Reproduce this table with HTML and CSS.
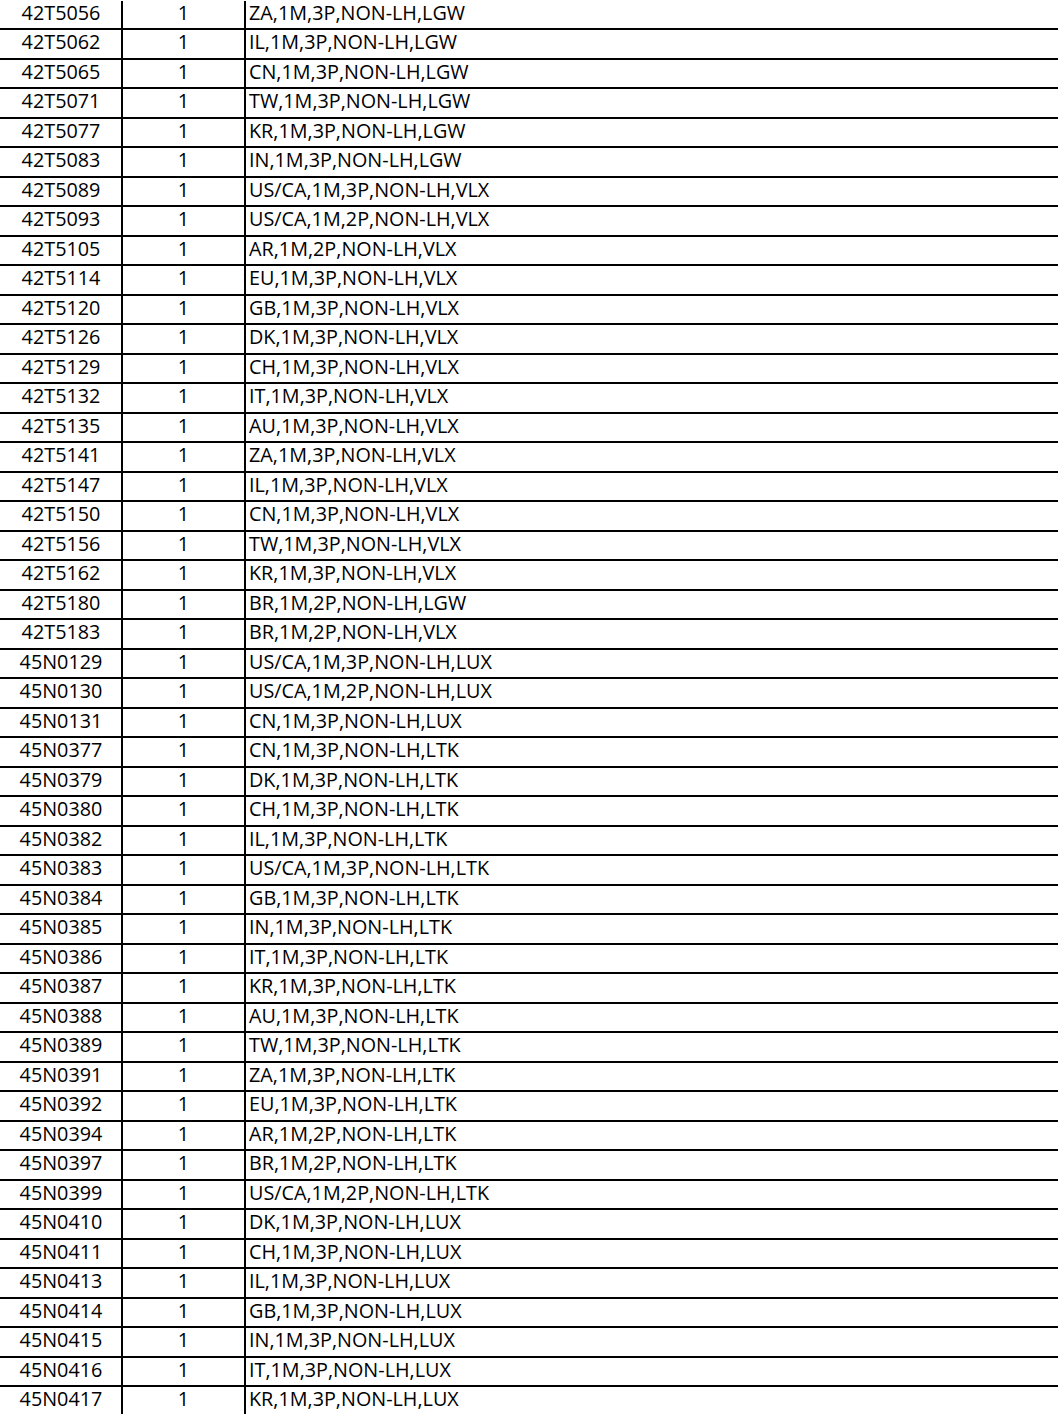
FILE: index.html
```html
<!DOCTYPE html>
<html>
<head>
<meta charset="utf-8">
<link rel="stylesheet" href="styles.css">
</head>
<body>
<div class="sheet">
<div class="row"><div class="c part">42T5056</div><div class="c qty">1</div><div class="c desc">ZA,1M,3P,NON-LH,LGW</div></div>
<div class="row"><div class="c part">42T5062</div><div class="c qty">1</div><div class="c desc">IL,1M,3P,NON-LH,LGW</div></div>
<div class="row"><div class="c part">42T5065</div><div class="c qty">1</div><div class="c desc">CN,1M,3P,NON-LH,LGW</div></div>
<div class="row"><div class="c part">42T5071</div><div class="c qty">1</div><div class="c desc">TW,1M,3P,NON-LH,LGW</div></div>
<div class="row"><div class="c part">42T5077</div><div class="c qty">1</div><div class="c desc">KR,1M,3P,NON-LH,LGW</div></div>
<div class="row"><div class="c part">42T5083</div><div class="c qty">1</div><div class="c desc">IN,1M,3P,NON-LH,LGW</div></div>
<div class="row"><div class="c part">42T5089</div><div class="c qty">1</div><div class="c desc">US/CA,1M,3P,NON-LH,VLX</div></div>
<div class="row"><div class="c part">42T5093</div><div class="c qty">1</div><div class="c desc">US/CA,1M,2P,NON-LH,VLX</div></div>
<div class="row"><div class="c part">42T5105</div><div class="c qty">1</div><div class="c desc">AR,1M,2P,NON-LH,VLX</div></div>
<div class="row"><div class="c part">42T5114</div><div class="c qty">1</div><div class="c desc">EU,1M,3P,NON-LH,VLX</div></div>
<div class="row"><div class="c part">42T5120</div><div class="c qty">1</div><div class="c desc">GB,1M,3P,NON-LH,VLX</div></div>
<div class="row"><div class="c part">42T5126</div><div class="c qty">1</div><div class="c desc">DK,1M,3P,NON-LH,VLX</div></div>
<div class="row"><div class="c part">42T5129</div><div class="c qty">1</div><div class="c desc">CH,1M,3P,NON-LH,VLX</div></div>
<div class="row"><div class="c part">42T5132</div><div class="c qty">1</div><div class="c desc">IT,1M,3P,NON-LH,VLX</div></div>
<div class="row"><div class="c part">42T5135</div><div class="c qty">1</div><div class="c desc">AU,1M,3P,NON-LH,VLX</div></div>
<div class="row"><div class="c part">42T5141</div><div class="c qty">1</div><div class="c desc">ZA,1M,3P,NON-LH,VLX</div></div>
<div class="row"><div class="c part">42T5147</div><div class="c qty">1</div><div class="c desc">IL,1M,3P,NON-LH,VLX</div></div>
<div class="row"><div class="c part">42T5150</div><div class="c qty">1</div><div class="c desc">CN,1M,3P,NON-LH,VLX</div></div>
<div class="row"><div class="c part">42T5156</div><div class="c qty">1</div><div class="c desc">TW,1M,3P,NON-LH,VLX</div></div>
<div class="row"><div class="c part">42T5162</div><div class="c qty">1</div><div class="c desc">KR,1M,3P,NON-LH,VLX</div></div>
<div class="row"><div class="c part">42T5180</div><div class="c qty">1</div><div class="c desc">BR,1M,2P,NON-LH,LGW</div></div>
<div class="row"><div class="c part">42T5183</div><div class="c qty">1</div><div class="c desc">BR,1M,2P,NON-LH,VLX</div></div>
<div class="row"><div class="c part">45N0129</div><div class="c qty">1</div><div class="c desc">US/CA,1M,3P,NON-LH,LUX</div></div>
<div class="row"><div class="c part">45N0130</div><div class="c qty">1</div><div class="c desc">US/CA,1M,2P,NON-LH,LUX</div></div>
<div class="row"><div class="c part">45N0131</div><div class="c qty">1</div><div class="c desc">CN,1M,3P,NON-LH,LUX</div></div>
<div class="row"><div class="c part">45N0377</div><div class="c qty">1</div><div class="c desc">CN,1M,3P,NON-LH,LTK</div></div>
<div class="row"><div class="c part">45N0379</div><div class="c qty">1</div><div class="c desc">DK,1M,3P,NON-LH,LTK</div></div>
<div class="row"><div class="c part">45N0380</div><div class="c qty">1</div><div class="c desc">CH,1M,3P,NON-LH,LTK</div></div>
<div class="row"><div class="c part">45N0382</div><div class="c qty">1</div><div class="c desc">IL,1M,3P,NON-LH,LTK</div></div>
<div class="row"><div class="c part">45N0383</div><div class="c qty">1</div><div class="c desc">US/CA,1M,3P,NON-LH,LTK</div></div>
<div class="row"><div class="c part">45N0384</div><div class="c qty">1</div><div class="c desc">GB,1M,3P,NON-LH,LTK</div></div>
<div class="row"><div class="c part">45N0385</div><div class="c qty">1</div><div class="c desc">IN,1M,3P,NON-LH,LTK</div></div>
<div class="row"><div class="c part">45N0386</div><div class="c qty">1</div><div class="c desc">IT,1M,3P,NON-LH,LTK</div></div>
<div class="row"><div class="c part">45N0387</div><div class="c qty">1</div><div class="c desc">KR,1M,3P,NON-LH,LTK</div></div>
<div class="row"><div class="c part">45N0388</div><div class="c qty">1</div><div class="c desc">AU,1M,3P,NON-LH,LTK</div></div>
<div class="row"><div class="c part">45N0389</div><div class="c qty">1</div><div class="c desc">TW,1M,3P,NON-LH,LTK</div></div>
<div class="row"><div class="c part">45N0391</div><div class="c qty">1</div><div class="c desc">ZA,1M,3P,NON-LH,LTK</div></div>
<div class="row"><div class="c part">45N0392</div><div class="c qty">1</div><div class="c desc">EU,1M,3P,NON-LH,LTK</div></div>
<div class="row"><div class="c part">45N0394</div><div class="c qty">1</div><div class="c desc">AR,1M,2P,NON-LH,LTK</div></div>
<div class="row"><div class="c part">45N0397</div><div class="c qty">1</div><div class="c desc">BR,1M,2P,NON-LH,LTK</div></div>
<div class="row"><div class="c part">45N0399</div><div class="c qty">1</div><div class="c desc">US/CA,1M,2P,NON-LH,LTK</div></div>
<div class="row"><div class="c part">45N0410</div><div class="c qty">1</div><div class="c desc">DK,1M,3P,NON-LH,LUX</div></div>
<div class="row"><div class="c part">45N0411</div><div class="c qty">1</div><div class="c desc">CH,1M,3P,NON-LH,LUX</div></div>
<div class="row"><div class="c part">45N0413</div><div class="c qty">1</div><div class="c desc">IL,1M,3P,NON-LH,LUX</div></div>
<div class="row"><div class="c part">45N0414</div><div class="c qty">1</div><div class="c desc">GB,1M,3P,NON-LH,LUX</div></div>
<div class="row"><div class="c part">45N0415</div><div class="c qty">1</div><div class="c desc">IN,1M,3P,NON-LH,LUX</div></div>
<div class="row"><div class="c part">45N0416</div><div class="c qty">1</div><div class="c desc">IT,1M,3P,NON-LH,LUX</div></div>
<div class="row"><div class="c part">45N0417</div><div class="c qty">1</div><div class="c desc">KR,1M,3P,NON-LH,LUX</div></div>
</div>
</body>
</html>
```

FILE: styles.css
```css
html, body {
  margin: 0;
  padding: 0;
  background: #ffffff;
}
body {
  overflow: hidden;
  font-family: "Open Sans", "Liberation Sans", sans-serif;
  font-size: 19.8px;
  color: #000000;
}
.sheet {
  padding-top: 0.5px;
}
.row {
  display: grid;
  grid-template-columns: 123px 123px 1fr;
  height: 29.5px;
  box-sizing: border-box;
  border-bottom: 2px solid #000000;
}
.c {
  line-height: 24.5px;
  white-space: nowrap;
  box-sizing: border-box;
}
.part {
  text-align: center;
  border-right: 2px solid #000000;
  padding-left: 1px;
}
.qty {
  text-align: center;
  border-right: 2px solid #000000;
}
.desc {
  padding-left: 3px;
}
```
